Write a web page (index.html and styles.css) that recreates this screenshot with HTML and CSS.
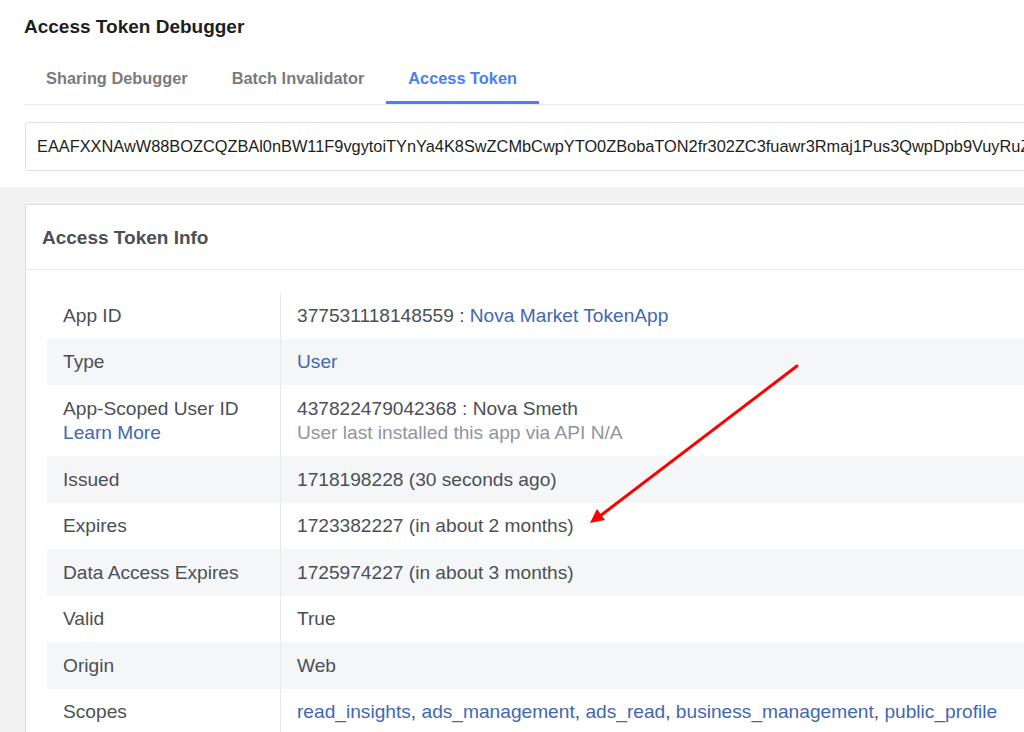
FILE: index.html
```html
<!DOCTYPE html>
<html lang="en">
<head>
    <meta charset="UTF-8">
    <title>Access Token Debugger</title>
    <link rel="stylesheet" href="styles.css">
</head>
<body>
    <div class="page">
        <div class="top">
            <h1 class="title">Access Token Debugger</h1>
            <div class="tabs">
                <div class="tab">Sharing Debugger</div>
                <div class="tab">Batch Invalidator</div>
                <div class="tab active">Access Token</div>
            </div>
            <div class="token-input">EAAFXXNAwW88BOZCQZBAl0nBW11F9vgytoiTYnYa4K8SwZCMbCwpYTO0ZBobaTON2fr302ZC3fuawr3Rmaj1Pus3QwpDpb9VuyRuZBZCf3ZA7kdLx</div>
        </div>

        <div class="band">
            <div class="card">
                <div class="card-header">Access Token Info</div>
                <div class="card-body">
                    <table class="info">
                        <tr>
                            <td class="label">App ID</td>
                            <td class="value">377531118148559 : <a href="#">Nova Market TokenApp</a></td>
                        </tr>
                        <tr class="odd">
                            <td class="label">Type</td>
                            <td class="value"><a href="#">User</a></td>
                        </tr>
                        <tr>
                            <td class="label">App-Scoped User ID<br><a href="#">Learn More</a></td>
                            <td class="value">437822479042368 : Nova Smeth<br><span class="muted">User last installed this app via API N/A</span></td>
                        </tr>
                        <tr class="odd">
                            <td class="label">Issued</td>
                            <td class="value">1718198228 (30 seconds ago)</td>
                        </tr>
                        <tr>
                            <td class="label">Expires</td>
                            <td class="value">1723382227 (in about 2 months)</td>
                        </tr>
                        <tr class="odd">
                            <td class="label">Data Access Expires</td>
                            <td class="value">1725974227 (in about 3 months)</td>
                        </tr>
                        <tr>
                            <td class="label">Valid</td>
                            <td class="value">True</td>
                        </tr>
                        <tr class="odd">
                            <td class="label">Origin</td>
                            <td class="value">Web</td>
                        </tr>
                        <tr>
                            <td class="label">Scopes</td>
                            <td class="value"><a href="#">read_insights</a>, <a href="#">ads_management</a>, <a href="#">ads_read</a>, <a href="#">business_management</a>, <a href="#">public_profile</a></td>
                        </tr>
                    </table>
                </div>
            </div>
        </div>
    </div>

    <!-- Markierung (roter Pfeil) -->
    <svg class="arrow" width="1024" height="732" viewBox="0 0 1024 732">
        <line x1="797" y1="366" x2="600" y2="516" stroke="#f00" stroke-width="3" stroke-linecap="round"/>
        <polygon points="590,523 597,509 605,520" fill="#f00"/>
    </svg>
</body>
</html>
```

FILE: styles.css
```css
html, body {
    margin: 0;
    overflow: hidden;
    background-color: #fff;
}

body {
    font-family: "Liberation Sans", Arial, sans-serif;
    color: #4b4f56;
    position: relative;
}

.page {
    width: 1200px;
}

.top {
    padding: 0 0 0 24px;
}

.title {
    margin: 0;
    padding-top: 15px;
    font-size: 19px;
    line-height: 24px;
    font-weight: bold;
    color: #1c1e21;
}

.tabs {
    display: flex;
    margin-top: 16px;
    border-bottom: 1px solid #e9eaed;
}

.tab {
    padding: 13px 22px;
    font-size: 16.35px;
    line-height: 20px;
    font-weight: bold;
    color: #7b7b7b;
    border-bottom: 3px solid transparent;
}

.tab.active {
    color: #4a80f5;
    border-bottom-color: #4a80f5;
}

.token-input {
    margin-top: 17px;
    margin-left: 1px;
    padding: 13px 12px 14px 11px;
    font-size: 16.35px;
    line-height: 20px;
    color: #1c1e21;
    border: 1px solid #dddfe2;
    border-radius: 3px;
    white-space: nowrap;
    overflow: hidden;
}

.band {
    margin-top: 16px;
    padding: 17px 0 0 25px;
    background-color: #f2f2f2;
    height: 600px;
}

.card {
    background-color: #fff;
    border: 1px solid #dddfe2;
    height: 100%;
}

.card-header {
    height: 63px;
    padding: 1px 16px 0;
    display: flex;
    align-items: center;
    font-size: 19px;
    font-weight: bold;
    color: #4b4f56;
    border-bottom: 1px solid #e9eaed;
}

.card-body {
    padding: 22px 0 0 21px;
}

.info {
    width: 100%;
    border-collapse: collapse;
    font-size: 19.15px;
    line-height: 24.5px;
}

.info td {
    padding: 11.5px 16px 10.5px;
    vertical-align: top;
}

.info .label {
    width: 201px;
    border-right: 1px solid #e9eaed;
}

.info tr.odd {
    background-color: #f5f6f7;
}

.info a {
    color: #4267b2;
    text-decoration: none;
}

.muted {
    color: #90949c;
}

.arrow {
    position: absolute;
    left: 0;
    top: 0;
    pointer-events: none;
}
```
